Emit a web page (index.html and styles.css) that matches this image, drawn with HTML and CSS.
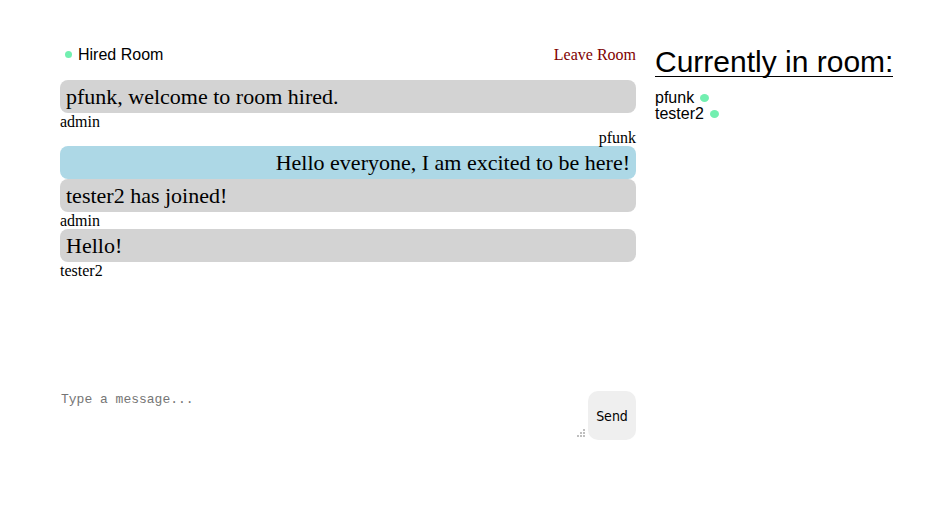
FILE: index.html
```html
<!DOCTYPE html>
<html lang="en">
<head>
<meta charset="utf-8">
<meta name="viewport" content="width=device-width, initial-scale=1">
<title>Hired Room</title>
<link rel="stylesheet" href="styles.css">
</head>
<body>
<div class="page">
  <main class="chat">
    <header class="bar">
      <h1 class="room"><span class="dot"></span>Hired Room</h1>
      <a class="leave" href="#">Leave Room</a>
    </header>
    <section class="messages" aria-label="Messages">
      <article class="message">
        <p class="bubble">pfunk, welcome to room hired.</p>
        <p class="author">admin</p>
      </article>
      <article class="message own">
        <p class="author">pfunk</p>
        <p class="bubble">Hello everyone, I am excited to be here!</p>
      </article>
      <article class="message">
        <p class="bubble">tester2 has joined!</p>
        <p class="author">admin</p>
      </article>
      <article class="message">
        <p class="bubble">Hello!</p>
        <p class="author">tester2</p>
      </article>
    </section>
    <form class="composer">
      <div class="field">
        <textarea class="input" aria-label="Message" placeholder="Type a message..."></textarea>
        <svg class="grip" width="9" height="9" viewBox="0 0 9 9" fill="#bfbfbf" shape-rendering="crispEdges" aria-hidden="true">
          <path d="M6 0h2v2h-2zM3 3h2v2h-2zM6 3h2v2h-2zM0 6h2v2h-2zM3 6h2v2h-2zM6 6h2v2h-2z"/>
        </svg>
      </div>
      <button class="send" type="button">Send</button>
    </form>
  </main>
  <aside class="people">
    <h2 class="title">Currently in room:</h2>
    <ul class="list">
      <li class="person">pfunk<span class="dot wide"></span></li>
      <li class="person">tester2<span class="dot wide"></span></li>
    </ul>
  </aside>
</div>
</body>
</html>
```
FILE: styles.css
```css
* {
  box-sizing: border-box;
}

body,
h1,
h2,
p,
ul {
  margin: 0;
  padding: 0;
}

body {
  background: #fff;
  color: #000;
  font: 16px/16px "Liberation Sans", Arial, sans-serif;
}

.page {
  display: grid;
  grid-template-columns: minmax(0, 1fr) 273px;
  column-gap: 19px;
  padding: 45px 0 0 60px;
}

.bar {
  display: flex;
  align-items: center;
  justify-content: space-between;
  height: 19px;
  margin-bottom: 16px;
  padding-left: 5px;
}

.room {
  display: flex;
  align-items: center;
  gap: 6px;
  font-size: 16px;
  font-weight: normal;
}

.dot {
  width: 7px;
  height: 7px;
  border-radius: 50%;
  background: #72efb0;
}

.dot.wide {
  width: 9px;
  height: 8px;
}

.leave {
  color: #800000;
  font-family: "Liberation Serif", "Times New Roman", serif;
  text-decoration: none;
}

.messages {
  min-height: 311px;
  font-family: "Liberation Serif", "Times New Roman", serif;
}

.bubble {
  padding: 4px 6px;
  border-radius: 8px;
  background: #d3d3d3;
  font-size: 22px;
  line-height: 25px;
}

.author {
  line-height: 17px;
}

.own {
  text-align: right;
}

.own .author {
  line-height: 16px;
}

.own .bubble {
  background: #add8e6;
}

.composer {
  display: flex;
  gap: 1px;
  height: 49px;
}

.field {
  position: relative;
  flex: 1;
}

.input {
  display: block;
  width: 100%;
  height: 100%;
  padding: 1px;
  border: 0;
  outline: 0;
  resize: none;
  background: transparent;
  font: 13px/15px "Liberation Mono", "Courier New", monospace;
}

.input::placeholder {
  color: #757575;
}

.grip {
  position: absolute;
  right: 1px;
  bottom: 2px;
}

.send {
  width: 48px;
  padding: 0;
  border: 0;
  border-radius: 10px;
  background: #efefef;
  color: #000;
  font: 14px/18px "DejaVu Sans Condensed", "DejaVu Sans", sans-serif;
}

.title {
  width: fit-content;
  margin-bottom: 13px;
  padding-top: 2px;
  border-bottom: 1px solid #000;
  font-size: 30px;
  font-weight: normal;
  line-height: 29px;
}

.list {
  list-style: none;
}

.person {
  display: flex;
  align-items: center;
  gap: 6px;
}
```
